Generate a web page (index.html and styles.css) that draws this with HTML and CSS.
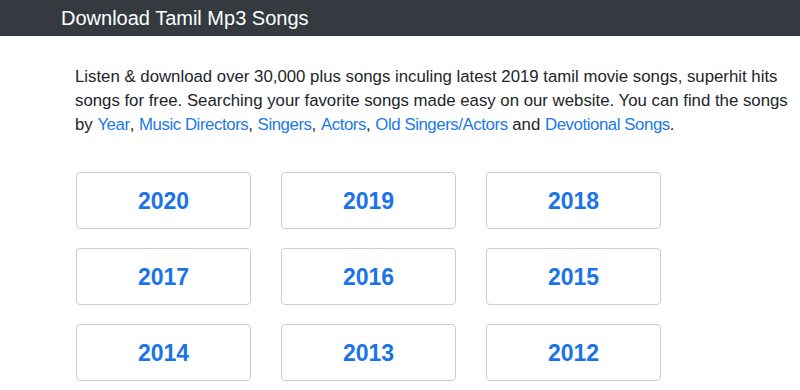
FILE: index.html
```html
<!DOCTYPE html>
<html lang="en">
<head>
    <meta charset="UTF-8">
    <meta name="viewport" content="width=device-width, initial-scale=1.0">
    <title>Download Tamil Mp3 Songs</title>
    <link rel="stylesheet" href="styles.css">
</head>
<body>

<!-- Top Bar -->
<div class="topbar">
    <div class="brand">Download Tamil Mp3 Songs</div>
</div>

<div class="content">
    <p class="intro">
        Listen &amp; download over 30,000 plus songs inculing latest 2019 tamil movie songs, superhit hits
        songs for free. Searching your favorite songs made easy on our website. You can find the songs
        by <a href="#">Year</a>, <a href="#">Music Directors</a>, <a href="#">Singers</a>, <a href="#">Actors</a>, <a href="#">Old Singers/Actors</a> and <a href="#">Devotional Songs</a>.
    </p>

    <!-- Year Boxes -->
    <div class="years">
        <a class="year" href="#">2020</a>
        <a class="year" href="#">2019</a>
        <a class="year" href="#">2018</a>
        <a class="year" href="#">2017</a>
        <a class="year" href="#">2016</a>
        <a class="year" href="#">2015</a>
        <a class="year" href="#">2014</a>
        <a class="year" href="#">2013</a>
        <a class="year" href="#">2012</a>
    </div>
</div>

</body>
</html>
```

FILE: styles.css
```css
/* Basic Reset */
body, p, a {
    margin: 0;
    padding: 0;
    text-decoration: none;
    font-family: 'Liberation Sans', Arial, sans-serif;
}

body {
    background: #fff;
    color: #212529;
}

/* Top Bar */
.topbar {
    background-color: #343a40;
    height: 36px;
    display: flex;
    align-items: center;
    padding: 0 61px;
}

.brand {
    color: #fff;
    font-size: 20px;
}

.content {
    padding: 29px 5px 20px 75px;
}

.intro {
    font-size: 16.8px;
    line-height: 24px;
    max-width: 720px;
}

.intro a {
    color: #2179e6;
    letter-spacing: -0.42px;
}

/* Year Grid */
.years {
    display: grid;
    grid-template-columns: repeat(3, 175px);
    column-gap: 30px;
    row-gap: 19px;
    margin: 35px 0 0 1px;
}

.year {
    display: flex;
    justify-content: center;
    align-items: center;
    height: 53px;
    padding-top: 2px;
    box-sizing: content-box;
    border: 1px solid #cccccc;
    border-radius: 4px;
    color: #1a73e8;
    font-size: 23px;
    font-weight: bold;
}
```
